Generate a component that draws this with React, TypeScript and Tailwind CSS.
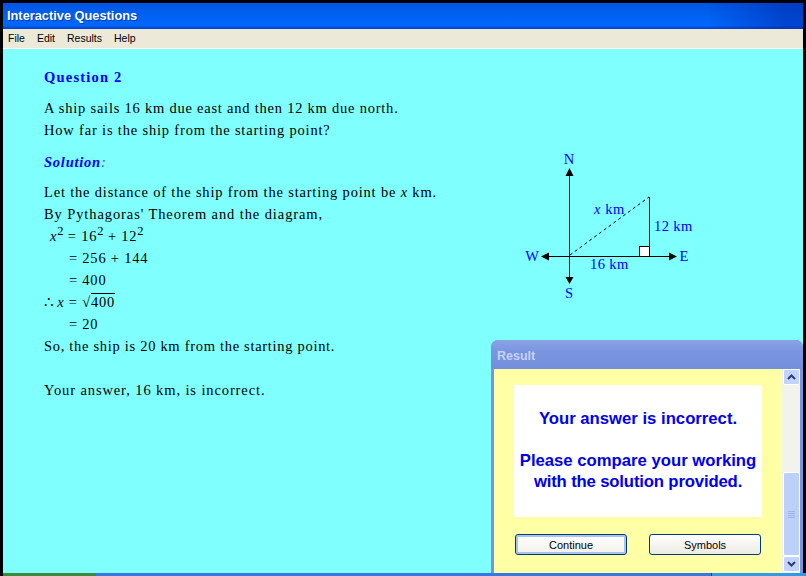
const serif = { fontFamily: '"Liberation Serif", serif' };

function Sup({ children }: { children: React.ReactNode }) {
  return <span className="relative top-[-6px] text-[12.5px] leading-[0] tracking-normal">{children}</span>;
}

function Diagram() {
  return (
    <svg width="200" height="160" viewBox="510 145 200 160" className="mt-[79px] shrink-0" style={serif}>
      <g stroke="#000" strokeWidth="1" shapeRendering="crispEdges" fill="none">
        <path d="M569.5 172V281M545 256.5H675M649.5 197V256" />
        <rect x="639.5" y="246.5" width="10" height="10" fill="#fff" />
        <path d="M570 255L649 197" strokeDasharray="3 3" shapeRendering="auto" />
      </g>
      <g fill="#000">
        <path d="M569.5 168l-4 8h8zM569.5 284l-4-7h8zM541 256.5l8-4v8zM677 256.5l-8-4v8z" />
      </g>
      <g fill="#0000ff" fontSize="14.5">
        <text x="569" y="164" textAnchor="middle">N</text>
        <text x="569" y="298" textAnchor="middle">S</text>
        <text x="532" y="261" textAnchor="middle">W</text>
        <text x="684" y="261" textAnchor="middle">E</text>
        <text x="594" y="214" letterSpacing="0.6"><tspan fontStyle="italic">x</tspan> km</text>
        <text x="654" y="231" letterSpacing="0.4">12 km</text>
        <text x="590" y="269" letterSpacing="0.4">16 km</text>
      </g>
    </svg>
  );
}

function ScrollBtn({ up }: { up?: boolean }) {
  return (
    <div className="flex h-4 items-center justify-center rounded-[2px] border border-white bg-[#c3d3fb]">
      <svg width="9" height="6" viewBox="0 0 9 6" fill="none" stroke="#2a3f78" strokeWidth="2">
        <path d={up ? "M1 5l3.5-3.5L8 5" : "M1 1l3.5 3.5L8 1"} />
      </svg>
    </div>
  );
}

function ResultDialog() {
  return (
    <div className="absolute bottom-[3px] right-[3px] flex h-[233px] w-[312px] flex-col overflow-hidden rounded-t-[7px] bg-[#7b93dc]">
      <div
        className="flex h-[29px] shrink-0 items-center pl-[6px] pt-[3px] text-[12.5px] font-bold text-[#c6d2ef]"
        style={{ fontFamily: '"Liberation Sans", sans-serif', background: 'linear-gradient(#8aa3e6 0%, #7a95e0 40%, #7390dc 100%)' }}
      >
        Result
      </div>
      <div className="flex min-h-0 flex-1 pl-[3px] pr-[3px]">
        <div className="flex flex-1 flex-col bg-[#ffffa6] pl-[20px] pt-[16px]" style={{ fontFamily: '"Liberation Sans", sans-serif' }}>
          <div className="flex h-[132px] w-[248px] flex-col items-center bg-white pt-[23px] text-[16.7px] font-bold leading-[21px] text-[#0000ee]">
            <p>Your answer is incorrect.</p>
            <p className="mt-[21px]">Please compare your working</p>
            <p className="tracking-[-0.15px]">with the solution provided.</p>
          </div>
          <div className="mt-[17px] flex gap-[22px] pl-[1px]">
            <button className="h-[21px] w-[112px] rounded-[3px] border border-[#003c74] bg-[linear-gradient(#fff,#f2f1ea)] pt-[1px] text-[11px] text-black shadow-[inset_0_0_0_2px_#a9c2ee]">Continue</button>
            <button className="h-[21px] w-[112px] rounded-[3px] border border-[#003c74] bg-[linear-gradient(#fff,#ecebe4)] pt-[1px] text-[11px] text-black">Symbols</button>
          </div>
        </div>
        <div className="flex w-[18px] shrink-0 flex-col bg-[#f3f3ee] pl-[1px]">
          <ScrollBtn up />
          <div className="mt-[87px] flex h-[84px] flex-col items-center justify-center gap-px rounded-[2px] border border-white bg-[#bdd0fa]">
            <div className="h-px w-[7px] bg-[#9db4e8]"></div>
            <div className="h-px w-[7px] bg-[#9db4e8]"></div>
            <div className="h-px w-[7px] bg-[#9db4e8]"></div>
            <div className="h-px w-[7px] bg-[#9db4e8]"></div>
          </div>
          <ScrollBtn />
        </div>
      </div>
    </div>
  );
}

export default function App() {
  return (
    <div className="relative flex h-[576px] w-[806px] flex-col overflow-hidden bg-black pt-[3px]">
      <div className="flex min-h-0 flex-1 flex-col px-[3px]">
        <div
          className="flex h-[26px] shrink-0 items-center pl-[4px] text-[12.8px] font-bold text-white [text-shadow:1px_1px_0_#0038a8]"
          style={{
            fontFamily: '"Liberation Sans", sans-serif',
            background: 'linear-gradient(90deg, transparent 88%, rgba(0,40,170,.55) 98%), linear-gradient(#0054e3 0%, #0060ee 40%, #0068ff 85%, #0043c4 100%)',
          }}
        >
          Interactive Questions
        </div>
        <div className="flex h-[19px] shrink-0 items-center gap-[12px] bg-[#ece9d8] pl-[5px] text-[10.5px] text-black" style={{ fontFamily: '"Liberation Sans", sans-serif' }}>
          <span>File</span>
          <span>Edit</span>
          <span>Results</span>
          <span>Help</span>
        </div>
        <div className="h-px shrink-0 bg-white"></div>
        <main className="flex min-h-0 flex-1 bg-[#80ffff] pl-[41px] pt-[17px]" style={serif}>
          <div className="w-[466px] shrink-0 text-[14.5px] leading-[22px] tracking-[0.77px] text-black">
            <h1 className="font-bold tracking-[1.2px] text-[#0000ff]">Question 2</h1>
            <p className="mt-[9px]">A ship sails 16 km due east and then 12 km due north.</p>
            <p className="tracking-[0.82px]">How far is the ship from the starting point?</p>
            <h2 className="mt-[10px] font-bold italic text-[#0000ff]">Solution<span className="font-normal text-[#4040ff]">:</span></h2>
            <p className="mt-[8px] tracking-[0.81px]">Let the distance of the ship from the starting point be <i>x</i> km.</p>
            <p className="tracking-[0.9px]">By Pythagoras' Theorem and the diagram,</p>
            <p className="pl-[6px]"><i>x</i><Sup>2</Sup> = 16<Sup>2</Sup> + 12<Sup>2</Sup></p>
            <p className="pl-[25px]">= 256 + 144</p>
            <p className="pl-[25px]">= 400</p>
            <p><span className="mr-[-2px]">∴</span> <i>x</i> = √<span className="border-t border-black">400</span></p>
            <p className="pl-[25px]">= 20</p>
            <p className="tracking-[0.7px]">So, the ship is 20 km from the starting point.</p>
            <p className="mt-[22px] tracking-[0.89px]">Your answer, 16 km, is incorrect.</p>
          </div>
          <Diagram />
        </main>
      </div>
      <div className="flex h-[3px] shrink-0 pl-[3px]">
        <div className="w-[93px] bg-[#3c8a3c]"></div>
        <div className="w-[615px] bg-[#3478e4]"></div>
        <div className="w-px bg-[#123a80]"></div>
        <div className="flex-1 bg-[#2f9be8]"></div>
      </div>
      <ResultDialog />
    </div>
  );
}
